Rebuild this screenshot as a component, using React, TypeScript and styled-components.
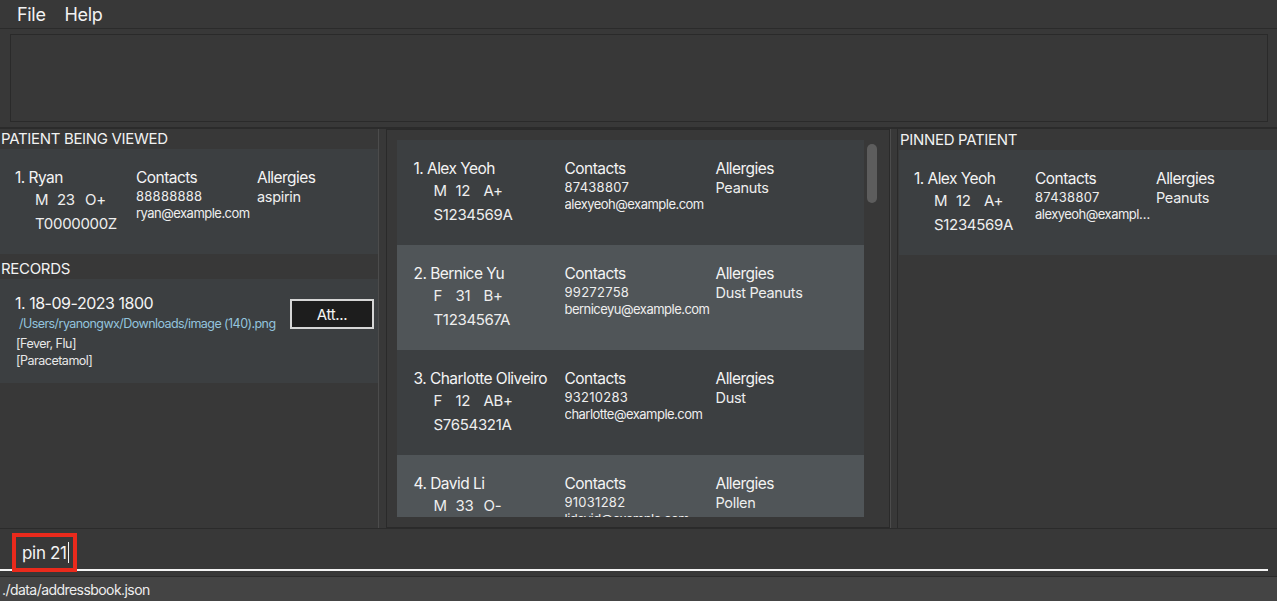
import React from 'react';
import styled, { createGlobalStyle } from 'styled-components';

const Global = createGlobalStyle`
  html, body { margin: 0; padding: 0; background: #383838; }
  body {
    font-family: Inter, "Liberation Sans", sans-serif;
    color: #f4f4f4;
    overflow: hidden;
    letter-spacing: -0.02em;
  }
  * { box-sizing: border-box; }
`;

type Patient = {
  name: string;
  gender: string;
  age: string;
  blood: string;
  nric: string;
  phone: string;
  email: string;
  allergies: string;
};

const patients: Patient[] = [
  { name: '1. Alex Yeoh', gender: 'M', age: '12', blood: 'A+', nric: 'S1234569A', phone: '87438807', email: 'alexyeoh@example.com', allergies: 'Peanuts' },
  { name: '2. Bernice Yu', gender: 'F', age: '31', blood: 'B+', nric: 'T1234567A', phone: '99272758', email: 'berniceyu@example.com', allergies: 'Dust Peanuts' },
  { name: '3. Charlotte Oliveiro', gender: 'F', age: '12', blood: 'AB+', nric: 'S7654321A', phone: '93210283', email: 'charlotte@example.com', allergies: 'Dust' },
  { name: '4. David Li', gender: 'M', age: '33', blood: 'O-', nric: 'S2345678B', phone: '91031282', email: 'lidavid@example.com', allergies: 'Pollen' },
];

const viewed: Patient = { name: '1. Ryan', gender: 'M', age: '23', blood: 'O+', nric: 'T0000000Z', phone: '88888888', email: 'ryan@example.com', allergies: 'aspirin' };

const Window = styled.div`
  width: 1277px;
  height: 601px;
  display: flex;
  flex-direction: column;
  background: #383838;
`;

const MenuBar = styled.div`
  height: 29px;
  display: flex;
  align-items: center;
  gap: 19px;
  padding-left: 17px;
  border-bottom: 1px solid #2b2b2b;
  font-size: 18px;
  color: #f2f2f2;
`;

const ResultArea = styled.div`
  height: 100px;
  padding: 5px 9px 5px 10px;
  border-bottom: 2px solid #2b2b2b;
  display: flex;
`;

const ResultBox = styled.div`
  flex: 1;
  border: 1px solid #2a2a2a;
  background: #383838;
`;

const Main = styled.div`
  height: 399px;
  display: flex;
`;

const LeftPane = styled.div`
  width: 379px;
  display: flex;
  flex-direction: column;
`;

const Divider = styled.div`
  width: 1px;
  background: #4c4c4c;
`;

const SectionTitle = styled.div<{ $top?: number }>`
  height: 20px;
  line-height: 20px;
  margin-top: ${p => p.$top ?? 0}px;
  padding-left: 1px;
  font-size: 15px;
  color: #f2f2f2;
`;

const Card = styled.div<{ $alt?: boolean; $pad: number; $h?: number }>`
  flex-shrink: 0;
  height: ${p => p.$h ?? 105}px;
  background: ${p => (p.$alt ? '#505558' : '#3c3f41')};
  display: flex;
  padding: 19px 0 0 ${p => p.$pad}px;
`;

const Col = styled.div<{ $w: number }>`
  width: ${p => p.$w}px;
  flex-shrink: 0;
  display: flex;
  flex-direction: column;
  min-width: 0;
  padding-right: 2px;
`;

const Name = styled.div`
  font-size: 15.5px;
  line-height: 20px;
  letter-spacing: -0.035em;
  white-space: nowrap;
`;

const SubLine = styled.div`
  display: flex;
  padding-left: 20px;
  font-size: 15px;
  line-height: 24px;
  color: #eeeeee;
`;

const Slot = styled.span<{ $w?: number }>`
  width: ${p => (p.$w ? `${p.$w}px` : 'auto')};
  flex-shrink: 0;
`;

const Small = styled.div<{ $tight?: boolean }>`
  font-size: 13px;
  line-height: 17px;
  letter-spacing: ${p => (p.$tight ? '-0.04em' : '0.02em')};
  color: #eeeeee;
  white-space: nowrap;
  overflow: hidden;
  text-overflow: ellipsis;
`;

const Value = styled.div`
  font-size: 14.5px;
  line-height: 18px;
  color: #eeeeee;
`;

const MiddleCell = styled.div`
  padding-left: 7px;
  display: flex;
`;

const MiddlePanel = styled.div`
  width: 504px;
  border: 1px solid #2a2a2a;
  padding: 10px 0 10px 10px;
  display: flex;
`;

const List = styled.div`
  width: 467px;
  overflow: hidden;
  display: flex;
  flex-direction: column;
`;

const ScrollTrack = styled.div`
  flex: 1;
  padding: 4px 0 0 3px;
`;

const ScrollThumb = styled.div`
  width: 10px;
  height: 59px;
  border-radius: 5px;
  background: #5d5d5d;
`;

const PinnedCell = styled.div`
  flex: 1;
  padding-left: 7px;
  display: flex;
`;

const PinnedPanel = styled.div`
  flex: 1;
  border-left: 1px solid #2a2a2a;
  display: flex;
  flex-direction: column;
  padding-top: 1px;
  padding-left: 1px;
`;

const RecordCard = styled(Card)`
  padding-top: 14px;
  padding-right: 4px;
  justify-content: space-between;
`;

const RecordInfo = styled.div`
  display: flex;
  flex-direction: column;
`;

const RecordDate = styled.div`
  font-size: 16px;
  line-height: 20px;
  letter-spacing: -0.03em;
`;

const RecordPath = styled.div`
  padding: 2px 0 0 4px;
  font-size: 12.5px;
  line-height: 18px;
  letter-spacing: -0.045em;
  color: #93c4de;
`;

const RecordTag = styled.div<{ $top?: number }>`
  padding-left: 1px;
  margin-top: ${p => p.$top ?? 0}px;
  font-size: 12.5px;
  line-height: 17px;
  letter-spacing: -0.04em;
  color: #e8e8e8;
`;

const AttachButton = styled.div`
  width: 84px;
  height: 30px;
  margin-top: 6px;
  border: 2px solid #d6d6d6;
  background: #1d1d1d;
  color: #f4f4f4;
  font-size: 15px;
  display: flex;
  align-items: center;
  justify-content: center;
`;

const CommandArea = styled.div`
  height: 48px;
  border-top: 1px solid #2b2b2b;
  padding: 4px 9px 0 0;
`;

const CommandField = styled.div`
  height: 38px;
  border-bottom: 2px solid #f4f4f4;
  display: flex;
  align-items: flex-start;
`;

const Highlight = styled.div`
  margin-left: 12px;
  width: 65px;
  height: 39px;
  border: 4px solid #ea2a1c;
  background: #383838;
  display: flex;
  align-items: center;
  padding-left: 6px;
  font-size: 17px;
  color: #f4f4f4;
`;

const Caret = styled.span`
  width: 1px;
  height: 21px;
  margin-left: 1px;
  background: #f4f4f4;
`;

const StatusBar = styled.div`
  height: 25px;
  border-top: 1px solid #2b2b2b;
  background: #444444;
  padding-left: 2px;
  display: flex;
  align-items: center;
  font-size: 14px;
  letter-spacing: -0.04em;
  color: #eeeeee;
`;

function PatientCard({ p, w, pad, alt }: { p: Patient; w: number; pad: number; alt?: boolean }) {
  return (
    <Card $alt={alt} $pad={pad}>
      <Col $w={w}>
        <Name>{p.name}</Name>
        <SubLine>
          <Slot $w={22}>{p.gender}</Slot>
          <Slot $w={28}>{p.age}</Slot>
          <Slot>{p.blood}</Slot>
        </SubLine>
        <SubLine>{p.nric}</SubLine>
      </Col>
      <Col $w={w}>
        <Name>Contacts</Name>
        <Small>{p.phone}</Small>
        <Small $tight>{p.email}</Small>
      </Col>
      <Col $w={w}>
        <Name>Allergies</Name>
        <Value>{p.allergies}</Value>
      </Col>
    </Card>
  );
}

export default function App() {
  return (
    <Window>
      <Global />
      <MenuBar>
        <span>File</span>
        <span>Help</span>
      </MenuBar>
      <ResultArea>
        <ResultBox />
      </ResultArea>
      <Main>
        <LeftPane>
          <SectionTitle>PATIENT BEING VIEWED</SectionTitle>
          <PatientCard p={viewed} w={121} pad={15} />
          <SectionTitle $top={5}>RECORDS</SectionTitle>
          <RecordCard $pad={15} $h={104}>
            <RecordInfo>
              <RecordDate>1. 18-09-2023 1800</RecordDate>
              <RecordPath>/Users/ryanongwx/Downloads/image (140).png</RecordPath>
              <RecordTag $top={2}>[Fever, Flu]</RecordTag>
              <RecordTag>[Paracetamol]</RecordTag>
            </RecordInfo>
            <AttachButton>Att...</AttachButton>
          </RecordCard>
        </LeftPane>
        <Divider />
        <MiddleCell>
          <MiddlePanel>
            <List>
              {patients.map((p, i) => (
                <PatientCard key={p.name} p={p} w={151} pad={17} alt={i % 2 === 1} />
              ))}
            </List>
            <ScrollTrack>
              <ScrollThumb />
            </ScrollTrack>
          </MiddlePanel>
        </MiddleCell>
        <Divider />
        <PinnedCell>
          <PinnedPanel>
            <SectionTitle>PINNED PATIENT</SectionTitle>
            <PatientCard p={patients[0]} w={121} pad={15} />
          </PinnedPanel>
        </PinnedCell>
      </Main>
      <CommandArea>
        <CommandField>
          <Highlight>
            pin 21<Caret />
          </Highlight>
        </CommandField>
      </CommandArea>
      <StatusBar>./data/addressbook.json</StatusBar>
    </Window>
  );
}
